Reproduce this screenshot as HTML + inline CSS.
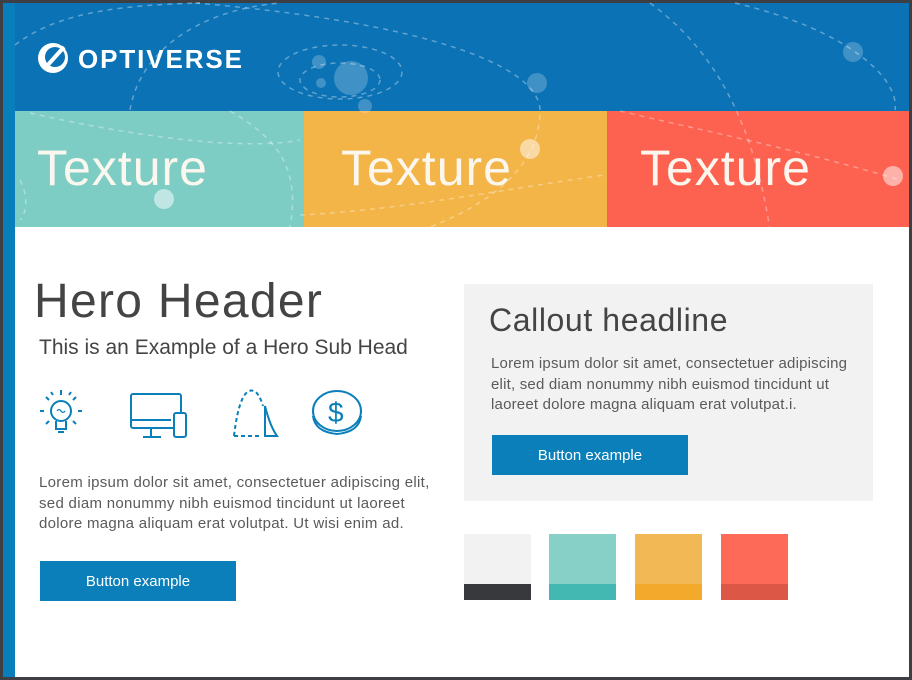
<!DOCTYPE html>
<html><head><meta charset="utf-8"><style>
*{margin:0;padding:0;box-sizing:border-box}
body{width:912px;height:680px;background:#3d3f42;position:relative;overflow:hidden;font-family:"Liberation Sans",sans-serif}
.a{position:absolute}
#strip{left:3px;top:3px;width:12px;height:674px;background:#0a7dbb}
#page{left:15px;top:3px;width:894px;height:674px;background:#fff}
#hdr{left:15px;top:3px;width:894px;height:108px;background:#0b72b5}
.tx{top:111px;height:116px;color:#fbf7ef;font-size:50px;line-height:114px;letter-spacing:1px}
.t{color:#444;}
.btn{background:#0a7fba;color:#fff;font-size:15px;text-align:center;line-height:42px;height:40px;width:196px}
.p{color:#5a5a5a;font-size:15px;line-height:20.5px;letter-spacing:0.3px}
</style></head><body>
<div class="a" id="strip"></div>
<div class="a" id="page"></div>
<div class="a" id="hdr"></div>
<div class="a tx" style="left:15px;width:289px;background:#7ecdc4;padding-left:22px">Texture</div>
<div class="a tx" style="left:304px;width:303px;background:#f3b448;padding-left:37px">Texture</div>
<div class="a tx" style="left:607px;width:302px;background:#fd6250;padding-left:33px">Texture</div>
<svg class="a" style="left:0;top:0" width="912" height="230">
<g fill="none" stroke="rgba(255,255,255,0.35)" stroke-width="1.5" stroke-dasharray="5 5">
<ellipse cx="340" cy="72" rx="62" ry="27"/><ellipse cx="340" cy="80" rx="40" ry="17"/>
<path d="M15 45 C60 10 130 5 200 3"/><path d="M130 110 C140 50 200 10 280 3"/>
<path d="M195 3 C400 20 540 60 540 111 C540 160 500 200 430 227"/>
<path d="M650 3 C700 40 750 100 770 230"/><path d="M735 3 C850 30 900 80 895 110"/>
<path d="M30 113 C150 140 250 150 300 140"/><path d="M620 111 C700 130 800 150 900 180"/>
<path d="M300 215 C400 210 500 190 604 175"/><path d="M20 180 C30 200 25 215 20 220"/>
<path d="M230 111 C280 140 300 170 290 227"/>
</g>
<g fill="rgba(255,255,255,0.22)"><circle cx="351" cy="78" r="17"/><circle cx="319" cy="62" r="7"/><circle cx="321" cy="83" r="5"/><circle cx="365" cy="106" r="7"/><circle cx="537" cy="83" r="10"/><circle cx="853" cy="52" r="10"/></g>
<g fill="rgba(255,255,255,0.5)"><circle cx="164" cy="199" r="10"/><circle cx="530" cy="149" r="10"/><circle cx="893" cy="176" r="10"/></g>
<circle cx="53" cy="58" r="15" fill="#fff"/><circle cx="55" cy="57" r="10" fill="#0b72b5"/>
<path d="M46 67 L64 47" stroke="#fff" stroke-width="4"/>
<text x="78" y="68" fill="#fff" font-family="Liberation Sans" font-size="26" font-weight="bold" letter-spacing="1.9">OPTIVERSE</text>
</svg>
<div class="a t" style="left:34px;top:274px;font-size:48px;letter-spacing:1.3px">Hero Header</div>
<div class="a t" style="left:39px;top:336px;font-size:21px">This is an Example of a Hero Sub Head</div>
<svg class="a" style="left:30px;top:385px" width="340" height="60" fill="none" stroke="#0a7fba" stroke-width="2">
<circle cx="31" cy="26" r="10"/><path d="M26 36v8h10v-8M28 47h6"/><path d="M27 26q2-3 4 0t4 0" stroke-width="1.2"/>
<path d="M31 5v5M16 12l3 3M46 12l-3 3M10 26h4M48 26h4M16 39l3-3M46 39l-3-3M21 7l2 3M41 7l-2 3"/>
<rect x="101" y="9" width="50" height="34" rx="2"/><path d="M101 35h40M121 43v8M113 52h18"/><rect x="144" y="28" width="12" height="24" rx="2" fill="#fff"/>
<path d="M204 51 q6-50 20-45 q5 2 9 15" stroke-dasharray="4 3"/><path d="M204 51h28" stroke-dasharray="4 3"/><path d="M235 21 v30 h12 q-7-10-12-30z"/>
<ellipse cx="307" cy="26" rx="24" ry="20"/><path d="M283 31 q2 16 24 18 q22-2 24-18"/>
<text x="298" y="37" fill="#0a7fba" stroke="none" font-size="28" font-family="Liberation Sans">$</text>
</svg>
<div class="a p" style="left:39px;top:473px;width:400px">Lorem ipsum dolor sit amet, consectetuer adipiscing elit, sed diam nonummy nibh euismod tincidunt ut laoreet dolore magna aliquam erat volutpat. Ut wisi enim ad.</div>
<div class="a btn" style="left:40px;top:561px">Button example</div>
<div class="a" style="left:464px;top:284px;width:409px;height:217px;background:#f2f2f2"></div>
<div class="a t" style="left:489px;top:302px;font-size:32px;letter-spacing:0.6px">Callout headline</div>
<div class="a p" style="left:491px;top:354px;width:370px;letter-spacing:0.2px">Lorem ipsum dolor sit amet, consectetuer adipiscing elit, sed diam nonummy nibh euismod tincidunt ut laoreet dolore magna aliquam erat volutpat.i.</div>
<div class="a btn" style="left:492px;top:435px">Button example</div>
<div class="a" style="left:464px;top:534px;width:67px;height:50px;background:#f2f2f2"></div><div class="a" style="left:464px;top:584px;width:67px;height:16px;background:#38393c"></div>
<div class="a" style="left:549px;top:534px;width:67px;height:50px;background:#87d0c8"></div><div class="a" style="left:549px;top:584px;width:67px;height:16px;background:#43b7b1"></div>
<div class="a" style="left:635px;top:534px;width:67px;height:50px;background:#f2b856"></div><div class="a" style="left:635px;top:584px;width:67px;height:16px;background:#f3a92b"></div>
<div class="a" style="left:721px;top:534px;width:67px;height:50px;background:#fe6a58"></div><div class="a" style="left:721px;top:584px;width:67px;height:16px;background:#dd5747"></div>
</body></html>
